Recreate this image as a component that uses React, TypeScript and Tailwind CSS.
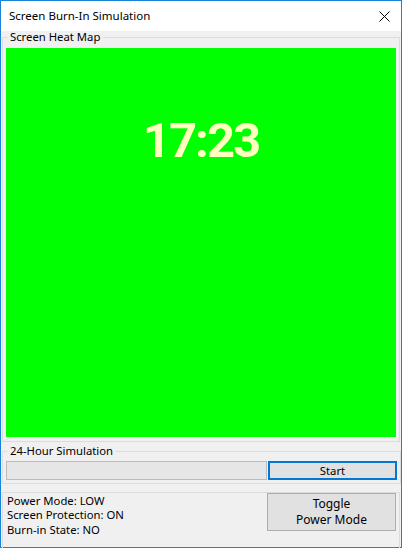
const uiFont = { fontFamily: '"Noto Sans", "Open Sans", sans-serif' };

function App() {
  return (
    <div
      className="w-[402px] h-[548px] border border-[#1883d7] bg-[#f0f0f0] flex flex-col text-[11.3px] text-black"
      style={uiFont}
    >
      {/* title bar */}
      <div className="h-[30px] bg-white flex items-center justify-between pl-[8px] pr-[11px] shrink-0">
        <span className="leading-[14px] text-[11.5px]">Screen Burn-In Simulation</span>
        <svg width="11" height="11" viewBox="0 0 11 11">
          <path d="M0.5 0.5 L10.5 10.5 M10.5 0.5 L0.5 10.5" stroke="#000" strokeWidth="1" />
        </svg>
      </div>

      {/* heat map group */}
      <fieldset className="mx-[1px] border border-[#dcdcdc] pl-[3px] pr-[3px] pt-[5px] pb-[4px]">
        <legend className="ml-[1px] px-[3px] leading-[12px]">Screen Heat Map</legend>
        <div className="w-[390px] h-[389px] bg-[#00ff00] flex justify-center pt-[68px]">
          <span
            className="text-[49px] leading-[50px] font-bold text-[#ffffc0] h-[50px] tracking-[-2px]"
            style={{ fontFamily: 'Roboto, "Liberation Sans", sans-serif' }}
          >
            17:23
          </span>
        </div>
      </fieldset>

      {/* simulation group */}
      <fieldset className="mx-[1px] mt-[3px] border border-[#dcdcdc] pl-[3px] pr-[3px] pt-[4px] pb-[3px]">
        <legend className="ml-[1px] px-[3px] leading-[12px]">24-Hour Simulation</legend>
        <div className="flex gap-[1px]">
          <div className="w-[261px] h-[19px] bg-[#e6e6e6] border border-[#bcbcbc]" />
          <button className="w-[129px] h-[19px] bg-[#e1e1e1] border-2 border-[#0078d7] flex items-center justify-center leading-[14px]">
            Start
          </button>
        </div>
      </fieldset>

      {/* status group */}
      <fieldset className="mx-[1px] mt-[8px] border border-[#dcdcdc] pl-[4px] pr-[3px] pb-[14px]">
        <div className="flex justify-between">
          <div className="flex flex-col leading-[14.4px] pt-[1px]">
            <span>Power Mode: LOW</span>
            <span>Screen Protection: ON</span>
            <span>Burn-in State: NO</span>
          </div>
          <button className="w-[129px] h-[38px] bg-[#e1e1e1] border border-[#adadad] flex flex-col items-center justify-center leading-[16px] text-[12px]">
            <span>Toggle</span>
            <span>Power Mode</span>
          </button>
        </div>
      </fieldset>
    </div>
  );
}

export default App;
